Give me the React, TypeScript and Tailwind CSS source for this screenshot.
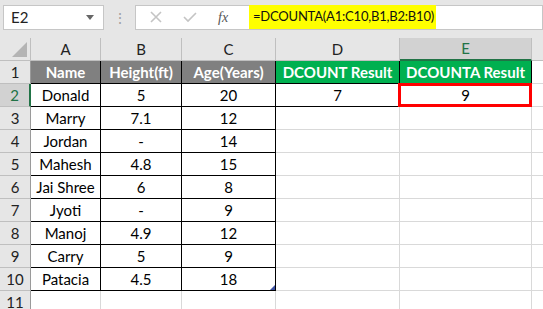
import React from 'react';

const cols = [
  { key: 'A', w: 'w-[70px]' },
  { key: 'B', w: 'w-[81px]' },
  { key: 'C', w: 'w-[94px]' },
  { key: 'D', w: 'w-[124px]' },
  { key: 'E', w: 'w-[132px]' },
];

const rows: string[][] = [
  ['Name', 'Height(ft)', 'Age(Years)', 'DCOUNT Result', 'DCOUNTA Result'],
  ['Donald', '5', '20', '7', '9'],
  ['Marry', '7.1', '12', '', ''],
  ['Jordan', '-', '14', '', ''],
  ['Mahesh', '4.8', '15', '', ''],
  ['Jai Shree', '6', '8', '', ''],
  ['Jyoti', '-', '9', '', ''],
  ['Manoj', '4.9', '12', '', ''],
  ['Carry', '5', '9', '', ''],
  ['Patacia', '4.5', '18', '', ''],
  ['', '', '', '', ''],
];

function cellClass(r: number, c: number) {
  const inTable = c < 3 && r < 10;
  const inResult = c >= 3 && r < 2;
  const black = inTable || inResult;
  let cls = 'relative flex items-center justify-center h-[23px] border-r border-b shrink-0 ';
  cls += black ? 'border-black ' : 'border-[#d9d9d9] ';
  if (r === 0 && c < 3) cls += 'bg-[#808080] text-white font-bold ';
  else if (r === 0) cls += 'bg-[#00b050] text-white font-bold ';
  else cls += 'bg-white text-black ';
  return cls;
}

export default function App() {
  return (
    <div className="w-[543px] h-[309px] overflow-hidden bg-[#e6e6e6] text-[15px] font-['Lato',sans-serif]">
      {/* formula bar */}
      <div className="flex items-center h-[38px] pb-[7px] pt-[3px]">
        <div className="ml-[3px] w-[101px] h-[25px] bg-white border border-[#c6c6c6] flex items-center justify-between pl-[7px] pr-[9px] text-[#222]">
          <span>E2</span>
          <span className="w-0 h-0 border-l-[4px] border-r-[4px] border-t-[5px] border-l-transparent border-r-transparent border-t-[#666]" />
        </div>
        <div className="w-[31px] flex justify-center text-[#a0a0a0] text-[14px]">⋮</div>
        <div className="flex-1 h-[25px] bg-white border border-[#c6c6c6] flex items-center">
          <div className="w-[113px] flex items-center shrink-0">
            <svg width="14" height="14" viewBox="0 0 14 14" className="ml-[13px]">
              <path d="M2 2 L12 12 M12 2 L2 12" stroke="#c4c4c4" strokeWidth="1.6" />
            </svg>
            <svg width="16" height="14" viewBox="0 0 16 14" className="ml-[19px]">
              <path d="M2 7 L6 11 L14 3" stroke="#c4c4c4" strokeWidth="1.6" fill="none" />
            </svg>
            <span className="ml-[20px] italic text-[#555] text-[14px] font-['Liberation_Serif',serif]">fx</span>
          </div>
          <div className="h-[24px] w-[187px] bg-[#ffff00] flex items-center pl-[4px] text-[#111] text-[13px] tracking-[-0.2px] whitespace-nowrap">
            =DCOUNTA(A1:C10,B1,B2:B10)
          </div>
        </div>
      </div>

      {/* column headers */}
      <div className="flex h-[23px]">
        <div className="relative w-[31px] shrink-0 border-r border-b border-[#bfbfbf] bg-[#e6e6e6]">
          <svg className="absolute right-[3px] bottom-[3px]" width="15" height="15" viewBox="0 0 15 15">
            <path d="M15 0 L15 15 L0 15 Z" fill="#b4b4b4" />
          </svg>
        </div>
        {cols.map((c) => (
          <div
            key={c.key}
            className={`${c.w} shrink-0 flex items-center justify-center border-r border-[#bfbfbf] ${
              c.key === 'E'
                ? 'bg-[#d2d2d2] text-[#217346] border-b-2 border-b-[#217346]'
                : 'bg-[#e6e6e6] text-[#222] border-b border-b-[#bfbfbf]'
            }`}
          >
            {c.key}
          </div>
        ))}
        <div className="flex-1 border-b border-[#bfbfbf]" />
      </div>

      {/* rows */}
      {rows.map((row, r) => (
        <div key={r} className="flex h-[23px]">
          <div
            className={`w-[31px] shrink-0 flex items-center justify-center border-b border-[#bfbfbf] ${
              r === 1
                ? 'bg-[#d2d2d2] text-[#217346] border-r-2 border-r-[#217346]'
                : 'bg-[#e6e6e6] text-[#222] border-r border-r-[#9a9a9a]'
            }`}
          >
            {r + 1}
          </div>
          {row.map((v, c) => (
            <div key={c} className={`${cols[c].w} ${cellClass(r, c)}`}>
              {v}
              {r === 1 && c === 4 && (
                <div className="absolute -left-[2px] -top-[1px] -right-[1px] -bottom-[1px] border-[3px] border-[#ff0000]" />
              )}
              {r === 9 && c === 2 && (
                <svg className="absolute right-0 bottom-0" width="5" height="5" viewBox="0 0 5 5">
                  <path d="M5 0 L5 5 L0 5 Z" fill="#3b4fa0" />
                </svg>
              )}
            </div>
          ))}
          <div className="flex-1 bg-white border-b border-[#d9d9d9]" />
        </div>
      ))}
    </div>
  );
}
